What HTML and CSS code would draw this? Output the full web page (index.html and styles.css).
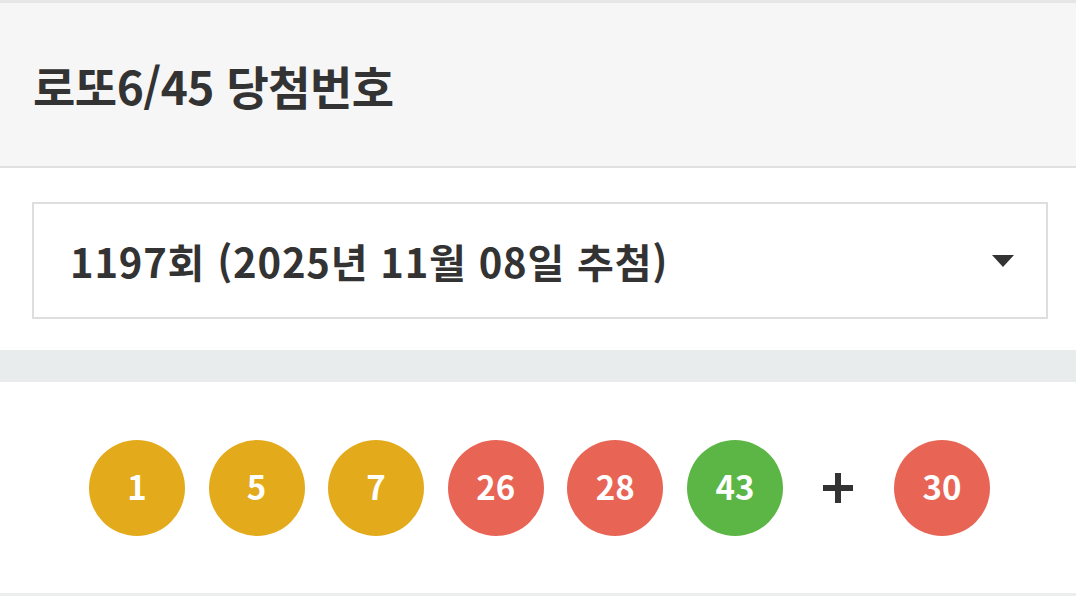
FILE: index.html
```html
<!DOCTYPE html>
<html lang="ko">
<head>
    <meta charset="UTF-8">
    <meta name="viewport" content="width=device-width, initial-scale=1.0">
    <title>로또6/45 당첨번호</title>
    <link rel="stylesheet" href="styles.css">
</head>
<body>
    <div class="page">
        <header class="title-bar">
            <h1>로또6/45 당첨번호</h1>
        </header>

        <div class="round-select">
            <div class="select-box">
                <span class="select-text">1197회 (2025년 11월 08일 추첨)</span>
                <svg class="caret" width="22" height="12" viewBox="0 0 22 12">
                    <path d="M0 0 L22 0 L11 12 Z" fill="#333"/>
                </svg>
            </div>
        </div>

        <div class="divider"></div>

        <div class="numbers">
            <span class="ball yellow">1</span>
            <span class="ball yellow">5</span>
            <span class="ball yellow">7</span>
            <span class="ball red">26</span>
            <span class="ball red">28</span>
            <span class="ball green">43</span>
            <svg class="plus" width="32" height="32" viewBox="0 0 32 32">
                <path d="M16 1 V31 M1 16 H31" stroke="#333" stroke-width="6"/>
            </svg>
            <span class="ball red">30</span>
        </div>
    </div>
</body>
</html>
```

FILE: styles.css
```css
body {
    margin: 0;
    background-color: #ffffff;
    color: #333333;
    font-family: "Noto Sans CJK KR", "Noto Sans", sans-serif;
}

.page {
    width: 1076px;
    height: 596px;
    overflow: hidden;
}

.title-bar {
    height: 163px;
    background-color: #f6f6f6;
    border-top: 3px solid #e6e6e6;
    border-bottom: 2px solid #e0e0e0;
    display: flex;
    align-items: center;
    padding-left: 33px;
}

h1 {
    margin: 0;
    font-size: 46px;
    font-weight: bold;
    letter-spacing: -0.5px;
    color: #333333;
}

.round-select {
    padding: 34px 28px 31px 32px;
}

.select-box {
    height: 113px;
    border: 2px solid #dedede;
    display: flex;
    align-items: center;
    justify-content: space-between;
    padding: 0 32px 0 36px;
}

.select-text {
    font-size: 40px;
    font-weight: bold;
    letter-spacing: 0.8px;
}

.caret {
    display: block;
}

.divider {
    height: 32px;
    background-color: #e9eced;
}

.numbers {
    height: 211px;
    border-bottom: 3px solid #eceeee;
    display: flex;
    align-items: center;
    justify-content: center;
    gap: 23.6px;
    padding-left: 3px;
}

.ball {
    width: 96px;
    height: 96px;
    border-radius: 50%;
    display: flex;
    align-items: center;
    justify-content: center;
    color: #ffffff;
    font-size: 33px;
    font-weight: bold;
    padding-bottom: 3px;
    box-sizing: border-box;
}

.yellow {
    background-color: #e3aa1b;
}

.red {
    background-color: #e86556;
}

.green {
    background-color: #5bb646;
}

.plus {
    display: block;
    margin: 0 16px;
}
```
